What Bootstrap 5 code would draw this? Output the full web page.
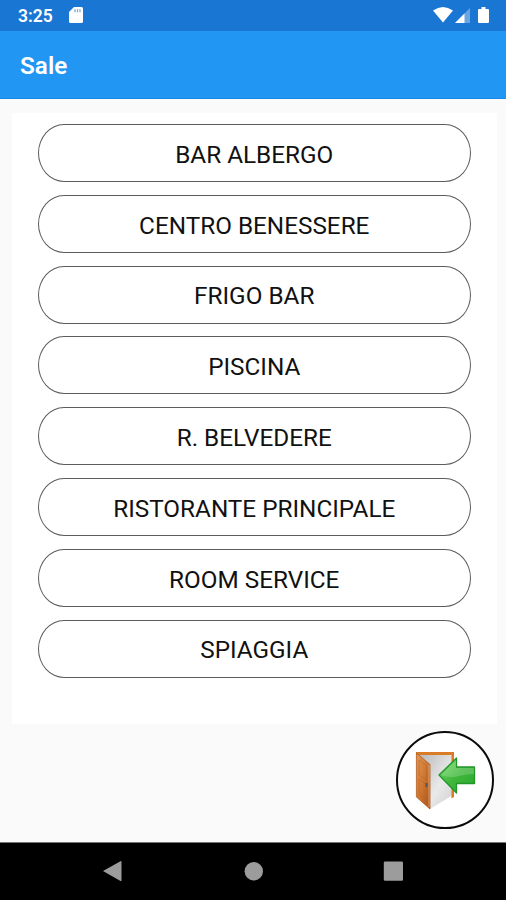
<!DOCTYPE html>
<html lang="it">
<head>
<meta charset="utf-8">
<meta name="viewport" content="width=device-width, initial-scale=1">
<title>Sale</title>
<link href="https://cdn.jsdelivr.net/npm/bootstrap@5.3.0/dist/css/bootstrap.min.css" rel="stylesheet">
<style>
body { font-family: Roboto, sans-serif; background: #fafafa; }
.screen { height: 900px; }
.status-bar { height: 30.5px; background: #1976d2; padding: 0 15px 0 18px; }
.status-time { font-size: 17.5px; font-weight: 600; line-height: 32px; padding-top: 1px; }
.app-bar { height: 68.5px; background: #2196f3; padding: 3px 20px 0; border-bottom: 1px solid #1888e4; }
.app-title { font-size: 24.2px; font-weight: 600; line-height: 1; letter-spacing: .1px; }
.room-panel { margin: 14px 9px 0 12px; padding: 11px 26px 0 25.5px; height: 611px; }
.room-list { gap: 12.8px; }
.room-btn { --bs-btn-border-color: #5c5c5c; --bs-btn-color: #111; --bs-btn-hover-border-color: #5c5c5c; height: 58px; flex: none; border-radius: 26px / 29px; font-size: 24.3px; line-height: 1; padding: 4px 0 0; }
.exit-row { padding: 7px 12px 0 0; }
.exit-btn { width: 98px; height: 98px; border: 2px solid #0b0b0b; }
.nav-keys { height: 58px; border-top: 1px solid #777; }
</style>
<script src="https://cdn.jsdelivr.net/npm/bootstrap@5.3.0/dist/js/bootstrap.bundle.min.js"></script>
</head>
<body>
<div class="screen d-flex flex-column overflow-hidden">
  <div class="status-bar d-flex align-items-center text-white flex-shrink-0">
    <span class="status-time">3:25</span>
    <svg class="ms-3" width="14" height="16" viewBox="0 0 14 16" aria-hidden="true"><path fill="#fff" d="M5 0h7.500Q14 0 14 1.500v13Q14 16 12.500 16h-11Q0 16 0 14.500V5z"/><path stroke="#1976d2" stroke-opacity=".65" stroke-width="1.200" d="M6 2.200v3M8.500 2.200v3M11 2.200v3"/></svg>
    <svg class="ms-auto" width="58" height="18" viewBox="0 0 58 18" aria-hidden="true">
      <path fill="#fff" d="M0 4.500Q10 -2.500 20 4.500L10 16.500z"/>
      <path fill="#fff" fill-opacity=".35" d="M22 17L37 2v15z"/>
      <path fill="#fff" d="M22 17L31.500 7.500V17z"/>
      <path fill="#fff" d="M46 3h2.500V1h4v2H55q1 0 1 1v12q0 1-1 1h-9q-1 0-1-1V4q0-1 1-1z"/>
    </svg>
  </div>
  <header class="app-bar d-flex align-items-center text-white flex-shrink-0"><h1 class="app-title mb-0">Sale</h1></header>
  <main class="flex-grow-1">
    <div class="room-panel bg-white">
      <div class="room-list d-flex flex-column">
        <button class="room-btn btn" type="button">BAR ALBERGO</button>
        <button class="room-btn btn" type="button">CENTRO BENESSERE</button>
        <button class="room-btn btn" type="button">FRIGO BAR</button>
        <button class="room-btn btn" type="button">PISCINA</button>
        <button class="room-btn btn" type="button">R. BELVEDERE</button>
        <button class="room-btn btn" type="button">RISTORANTE PRINCIPALE</button>
        <button class="room-btn btn" type="button">ROOM SERVICE</button>
        <button class="room-btn btn" type="button">SPIAGGIA</button>
      </div>
    </div>
    <div class="exit-row d-flex justify-content-end">
      <button class="exit-btn btn rounded-circle bg-white p-0 d-flex align-items-center justify-content-center" type="button" aria-label="Esci">
        <svg width="70" height="70" viewBox="0 0 70 70" aria-hidden="true">
          <defs>
            <linearGradient id="wood" x1="0" y1="0" x2="1" y2="1"><stop offset="0" stop-color="#e39a58"/><stop offset=".5" stop-color="#cf7630"/><stop offset="1" stop-color="#a9501a"/></linearGradient>
            <linearGradient id="light" x1="0" y1="0" x2="1" y2="1"><stop offset="0" stop-color="#b4b4b4"/><stop offset=".6" stop-color="#e9e9e9"/><stop offset="1" stop-color="#cfcfcf"/></linearGradient>
            <linearGradient id="leaf" x1="0" y1="0" x2="1" y2="1"><stop offset="0" stop-color="#7bdc6c"/><stop offset=".5" stop-color="#41b83c"/><stop offset="1" stop-color="#26a52b"/></linearGradient>
          </defs>
          <path fill="url(#light)" d="M7 8h36v42L20 64z"/>
          <path fill="#d97b27" d="M6 7h38v45l-2.500 1.500V10H6z"/>
          <path fill="url(#wood)" stroke="#b05c1e" stroke-width=".8" d="M6.400 8L20 19.500V64L6.400 52z"/>
          <path fill="none" stroke="#b4642a" stroke-opacity=".55" stroke-width="1" d="M9 15l7.500 6v14L9 30zM9 34l7.500 5.500V56L9 49.500z"/>
          <path stroke="#edb37c" stroke-width=".8" d="M19 20v42"/>
          <path stroke="#555" stroke-width="2" d="M16.500 38v4"/>
          <path fill="url(#leaf)" stroke="#21972b" stroke-width="1.300" stroke-linejoin="round" d="M29 30L46.500 13v9H64.500v16.500H46.500V48z"/>
          <path fill="#fff" fill-opacity=".18" d="M31 30L46 15.500V23h18v6q-10 0-17 2.500Q39 33 31 30z"/>
        </svg>
      </button>
    </div>
  </main>
  <nav class="nav-keys bg-black flex-shrink-0" aria-label="Sistema">
    <svg class="d-block" width="506" height="57" viewBox="0 0 506 57" fill="#9c9c9c" aria-hidden="true">
      <path d="M103 28L120.500 18.200Q121.500 17.700 121.500 19v18.200Q121.500 38.500 120.500 38z"/>
      <circle cx="253.800" cy="28.300" r="9.200"/>
      <rect x="383.800" y="18.600" width="19.200" height="19.200" rx="1.200"/>
    </svg>
  </nav>
</div>
</body>
</html>
